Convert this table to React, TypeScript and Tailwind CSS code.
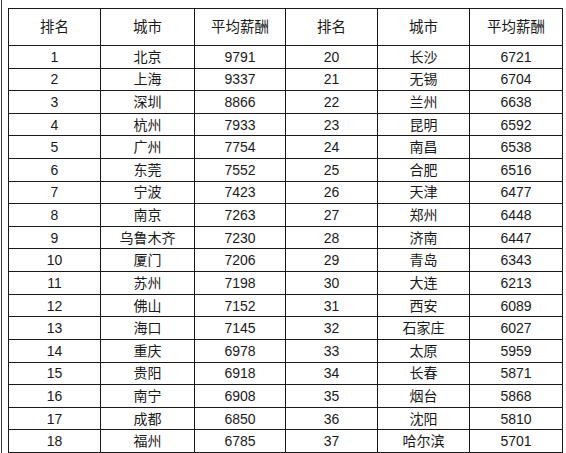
import React from "react";

const left: [string, string, string][] = [
  ["1", "北京", "9791"],
  ["2", "上海", "9337"],
  ["3", "深圳", "8866"],
  ["4", "杭州", "7933"],
  ["5", "广州", "7754"],
  ["6", "东莞", "7552"],
  ["7", "宁波", "7423"],
  ["8", "南京", "7263"],
  ["9", "乌鲁木齐", "7230"],
  ["10", "厦门", "7206"],
  ["11", "苏州", "7198"],
  ["12", "佛山", "7152"],
  ["13", "海口", "7145"],
  ["14", "重庆", "6978"],
  ["15", "贵阳", "6918"],
  ["16", "南宁", "6908"],
  ["17", "成都", "6850"],
  ["18", "福州", "6785"],
];

const right: [string, string, string][] = [
  ["20", "长沙", "6721"],
  ["21", "无锡", "6704"],
  ["22", "兰州", "6638"],
  ["23", "昆明", "6592"],
  ["24", "南昌", "6538"],
  ["25", "合肥", "6516"],
  ["26", "天津", "6477"],
  ["27", "郑州", "6448"],
  ["28", "济南", "6447"],
  ["29", "青岛", "6343"],
  ["30", "大连", "6213"],
  ["31", "西安", "6089"],
  ["32", "石家庄", "6027"],
  ["33", "太原", "5959"],
  ["34", "长春", "5871"],
  ["35", "烟台", "5868"],
  ["36", "沈阳", "5810"],
  ["37", "哈尔滨", "5701"],
];

const font = "font-['Liberation_Sans','Noto_Sans_CJK_SC',sans-serif]";

function Cell({ children }: { children: React.ReactNode }) {
  return (
    <div className="flex items-center justify-center bg-white text-[14px] leading-none text-[#1a1a1a]">
      {children}
    </div>
  );
}

export default function App() {
  const headers = ["排名", "城市", "平均薪酬", "排名", "城市", "平均薪酬"];
  return (
    <div className={`flex h-[453px] w-[566px] bg-white ${font}`}>
      <div className="ml-[1px] w-[1px] bg-[#3a3a3a]" />
      <div className="ml-[6px] mt-2">
        <div className="grid h-[445px] grid-cols-[91px_93px_90px_91px_91px_92px] grid-rows-[36px_repeat(18,1fr)] gap-px border border-[#1a1a1a] bg-[#1a1a1a]">
          {headers.map((h, i) => (
            <div
              key={i}
              className="flex items-center justify-center bg-white text-[14.5px] leading-none text-[#1a1a1a]"
            >
              {h}
            </div>
          ))}
          {left.map((l, i) => {
            const r = right[i];
            return (
              <React.Fragment key={i}>
                <Cell>{l[0]}</Cell>
                <Cell>{l[1]}</Cell>
                <Cell>{l[2]}</Cell>
                <Cell>{r[0]}</Cell>
                <Cell>{r[1]}</Cell>
                <Cell>{r[2]}</Cell>
              </React.Fragment>
            );
          })}
        </div>
      </div>
    </div>
  );
}
